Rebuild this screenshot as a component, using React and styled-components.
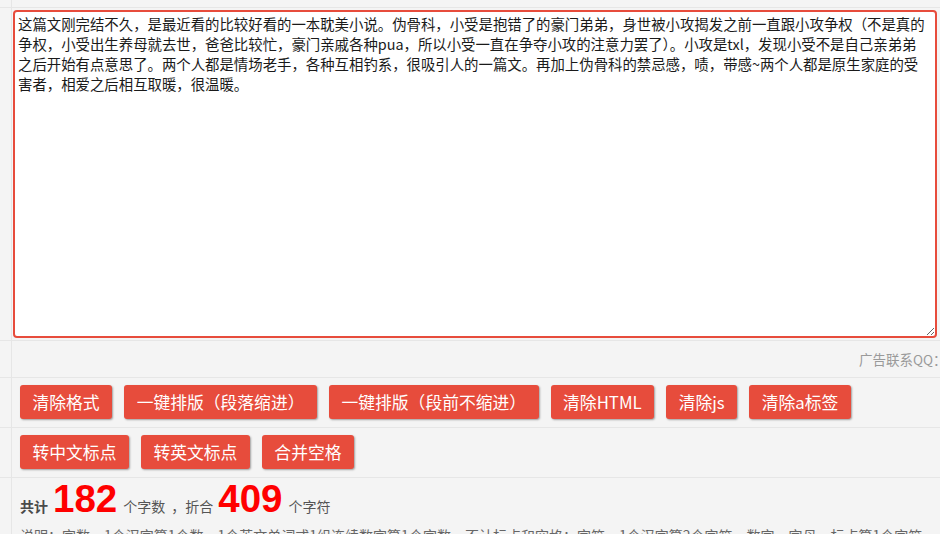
import React from "react";
import styled, { createGlobalStyle } from "styled-components";

const GlobalStyle = createGlobalStyle`
  html, body {
    margin: 0;
    padding: 0;
    background: #f4f4f4;
    overflow: hidden;
    font-family: "Noto Sans CJK SC", "Noto Sans", sans-serif;
  }
`;

const sample =
  "这篇文刚完结不久，是最近看的比较好看的一本耽美小说。伪骨科，小受是抱错了的豪门弟弟，身世被小攻揭发之前一直跟小攻争权（不是真的争权，小受出生养母就去世，爸爸比较忙，豪门亲戚各种pua，所以小受一直在争夺小攻的注意力罢了）。小攻是txl，发现小受不是自己亲弟弟之后开始有点意思了。两个人都是情场老手，各种互相钓系，很吸引人的一篇文。再加上伪骨科的禁忌感，啧，带感~两个人都是原生家庭的受害者，相爱之后相互取暖，很温暖。";

const firstRow = [
  "清除格式",
  "一键排版（段落缩进）",
  "一键排版（段前不缩进）",
  "清除HTML",
  "清除js",
  "清除a标签",
];
const secondRow = ["转中文标点", "转英文标点", "合并空格"];

function App() {
  return (
    <>
      <GlobalStyle />
      <Page>
        <Row $height="7px" $first>
          <Side />
          <Cell />
        </Row>
        <Row>
          <Side />
          <EditorCell>
            <Editor defaultValue={sample} spellCheck={false} />
          </EditorCell>
        </Row>
        <Row>
          <Side />
          <AdCell>
            <AdText>广告联系QQ：123456789</AdText>
          </AdCell>
        </Row>
        <Row>
          <Side />
          <ButtonCell>
            {firstRow.map((t) => (
              <ActionButton key={t}>{t}</ActionButton>
            ))}
          </ButtonCell>
        </Row>
        <Row>
          <Side />
          <ButtonCell>
            {secondRow.map((t) => (
              <ActionButton key={t}>{t}</ActionButton>
            ))}
          </ButtonCell>
        </Row>
        <Row>
          <Side />
          <StatsCell>
            <Stats>
              <Label $strong>共计</Label>
              <Count>182</Count>
              <Label>个字数</Label>
              <Comma>，</Comma>
              <Label>折合</Label>
              <Count>409</Count>
              <Label>个字符</Label>
            </Stats>
            <Note>
              说明：字数 = 1个汉字算1个数，1个英文单词或1组连续数字算1个字数，不计标点和空格；字符 = 1个汉字算2个字符，数字、字母、标点算1个字符
            </Note>
          </StatsCell>
        </Row>
      </Page>
    </>
  );
}

export default App;

const Page = styled.div`
  display: flex;
  flex-direction: column;
  width: 100%;
`;

const Row = styled.div`
  display: flex;
  height: ${(p) => p.$height || "auto"};
  border-top: ${(p) => (p.$first ? "none" : "1px solid #e6e6e6")};
`;

const Side = styled.div`
  flex: 0 0 11px;
  border-right: 1px solid #e6e6e6;
`;

const Cell = styled.div`
  flex: 1;
  min-width: 0;
`;

const EditorCell = styled(Cell)`
  padding: 2px 0 2px 1px;
`;

const Editor = styled.textarea`
  display: block;
  box-sizing: border-box;
  width: 924px;
  height: 328px;
  margin: 0;
  padding: 2px 8px 2px 3px;
  border: 2px solid #e74c3c;
  border-radius: 4px;
  background: #fff;
  color: #1a1a1a;
  font-family: "Noto Sans CJK SC", "Noto Sans", sans-serif;
  font-size: 14.4px;
  line-height: 20px;
  outline: none;
  resize: both;
`;

const AdCell = styled(Cell)`
  display: flex;
  align-items: center;
  height: 36px;
  overflow: hidden;
`;

const AdText = styled.span`
  margin-left: 847px;
  white-space: nowrap;
  color: #9a9a9a;
  font-size: 13.5px;
`;

const ButtonCell = styled(Cell)`
  display: flex;
  flex-wrap: wrap;
  gap: 12px;
  padding: 7px 0 8px 8px;
`;

const ActionButton = styled.button`
  height: 34px;
  padding: 0 12.5px;
  border: none;
  border-radius: 3px;
  background: #e74c3c;
  color: #fff;
  font-family: "Noto Sans CJK SC", "Noto Sans", sans-serif;
  font-size: 16.8px;
  line-height: 34px;
  white-space: nowrap;
  box-shadow: 1px 1px 2px rgba(0, 0, 0, 0.35);
  cursor: pointer;
`;

const StatsCell = styled(Cell)`
  padding: 2px 0 0 8px;
  overflow: hidden;
`;

const Stats = styled.div`
  display: flex;
  align-items: baseline;
  height: 38px;
  color: #555;
`;

const Label = styled.span`
  font-size: 14px;
  line-height: 20px;
  font-weight: ${(p) => (p.$strong ? 600 : 400)};
  color: ${(p) => (p.$strong ? "#4a4a4a" : "#555")};
`;

const Comma = styled.span`
  font-size: 14px;
  line-height: 20px;
  margin-left: 6px;
`;

const Count = styled.span`
  margin: 0 6px 0 5px;
  font-family: "Liberation Sans", Arial, sans-serif;
  font-weight: bold;
  font-size: 38.5px;
  line-height: 38px;
  color: #ff0000;
`;

const Note = styled.div`
  margin-top: 7px;
  color: #666;
  font-size: 14px;
  line-height: 20px;
  white-space: nowrap;
`;
